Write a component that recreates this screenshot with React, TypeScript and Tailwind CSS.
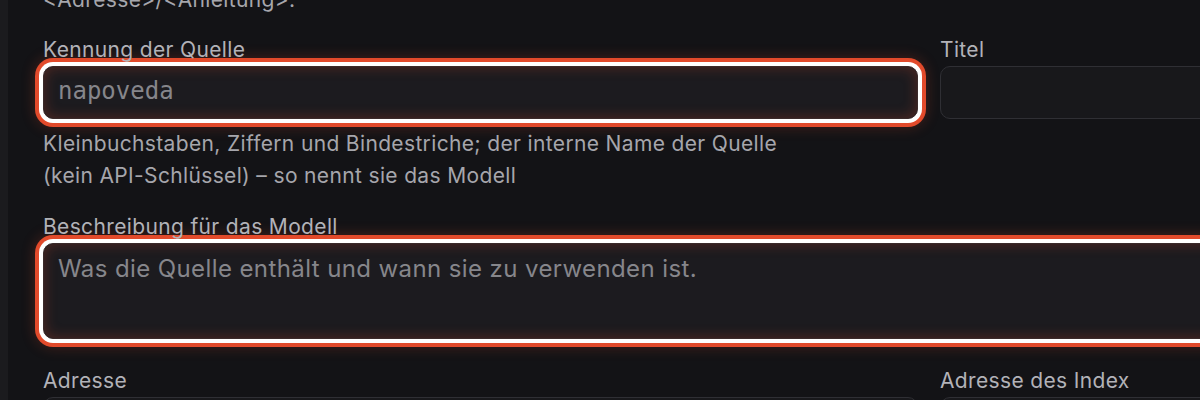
import React from "react";

const FONT = { fontFamily: "Inter, 'Noto Sans', sans-serif" };

const focusRing =
  "shadow-[0_0_0_4px_#ffffff,0_0_0_8px_#e24a2b,0_0_14px_8px_rgba(226,74,43,0.25),inset_0_0_14px_rgba(226,74,43,0.28)]";

const Label: React.FC<{ children: React.ReactNode }> = ({ children }) => (
  <label className="block text-[21px] tracking-[0.35px] leading-[28px] text-[#b2b2b8] mb-[2px]">{children}</label>
);

export default function App() {
  return (
    <div className="flex w-[1200px] h-[400px] overflow-hidden bg-[#131316]" style={FONT}>
      <div className="w-[8px] shrink-0 bg-[#1b1b1e]" />
      <div className="flex-1 min-w-0 pl-[35px] -mt-[16px]">
        <div className="w-[1300px]">
          <p className="text-[21px] tracking-[0.35px] leading-[32px] text-[#a6a6ac]">&lt;Adresse&gt;/&lt;Anleitung&gt;.</p>

          <div className="grid grid-cols-[875px_1fr] gap-x-[22px] mt-[20px]">
            <div>
              <Label>Kennung der Quelle</Label>
              <input
                readOnly
                placeholder="napoveda"
                className={`block w-full h-[53px] rounded-[10px] border border-[#3a2a2a] bg-[#1c1b1f] px-[14px] pb-[3px] text-[24px] text-[#d4d4d8] placeholder:text-[#86868b] outline-none ${focusRing}`}
                style={{ fontFamily: "'DejaVu Sans Mono', monospace" }}
              />
              <p className="mt-[9px] max-w-[760px] text-[21px] tracking-[0.35px] leading-[32px] text-[#a6a6ac]">
                Kleinbuchstaben, Ziffern und Bindestriche; der interne Name der Quelle (kein API-Schlüssel) – so nennt sie das Modell
              </p>
            </div>
            <div>
              <Label>Titel</Label>
              <input
                readOnly
                className="block w-full h-[53px] rounded-[10px] border border-[#2f2f34] bg-[#18181b] px-[14px] text-[24px] outline-none"
              />
            </div>
          </div>

          <div className="mt-[21px]">
            <Label>Beschreibung für das Modell</Label>
            <textarea
              readOnly
              placeholder="Was die Quelle enthält und wann sie zu verwenden ist."
              className={`block w-full h-[96px] mt-[2px] resize-none rounded-[10px] border border-[#3a2a2a] bg-[#1c1b1f] px-[14px] py-[9px] text-[24px] tracking-[0.4px] leading-[32px] text-[#d4d4d8] placeholder:text-[#86868b] outline-none ${focusRing}`}
            />
          </div>

          <div className="grid grid-cols-[875px_1fr] gap-x-[22px] mt-[28px]">
            <div>
              <Label>Adresse</Label>
              <input readOnly className="block w-full h-[53px] rounded-[10px] border border-[#2f2f34] bg-[#18181b]" />
            </div>
            <div>
              <Label>Adresse des Index</Label>
              <input readOnly className="block w-full h-[53px] rounded-[10px] border border-[#2f2f34] bg-[#18181b]" />
            </div>
          </div>
        </div>
      </div>
    </div>
  );
}
